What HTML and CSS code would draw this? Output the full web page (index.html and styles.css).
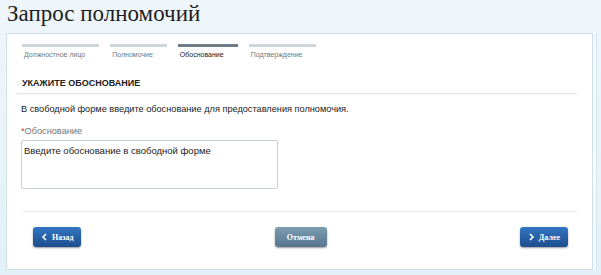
FILE: index.html
```html
<!DOCTYPE html>
<html lang="ru">
<head>
    <meta charset="UTF-8">
    <meta name="viewport" content="width=device-width, initial-scale=1.0">
    <title>Запрос полномочий</title>
    <link rel="stylesheet" href="styles.css">
</head>
<body>
    <h1 class="title">Запрос полномочий</h1>

    <div class="panel">
        <div class="steps">
            <div class="step">Должностное лицо</div>
            <div class="step">Полномочие</div>
            <div class="step active">Обоснование</div>
            <div class="step">Подтверждение</div>
        </div>

        <div class="section">
            <h2 class="section-title">УКАЖИТЕ ОБОСНОВАНИЕ</h2>
            <p class="hint">В свободной форме введите обоснование для предоставления полномочия.</p>
            <label class="label" for="reason"><span class="req">*</span>Обоснование</label>
            <textarea class="field" id="reason">Введите обоснование в свободной форме</textarea>
        </div>

        <div class="actions">
            <button class="button">
                <svg width="7" height="8" viewBox="0 0 7 8"><path d="M5 1 L2 4 L5 7" fill="none" stroke="#fff" stroke-width="1.6"/></svg>
                Назад
            </button>
            <button class="button cancel">Отмена</button>
            <button class="button">
                <svg width="7" height="8" viewBox="0 0 7 8"><path d="M2 1 L5 4 L2 7" fill="none" stroke="#fff" stroke-width="1.6"/></svg>
                Далее
            </button>
        </div>
    </div>
</body>
</html>
```
FILE: styles.css
```css
body {
    margin: 0;
    height: 275px;
    background: linear-gradient(to bottom, #eef6fb, #e4f0f8);
    font-family: 'Liberation Sans', Arial, sans-serif;
    color: #222;
    overflow: hidden;
}
.title {
    margin: 0;
    padding: 0 0 0 7px;
    height: 33px;
    font-family: 'Liberation Serif', 'Times New Roman', serif;
    font-weight: normal;
    font-size: 23px;
    line-height: 28px;
    color: #1e1e1e;
}
.panel {
    width: 585px;
    margin-left: 6px;
    background: #fff;
    border: 1px solid #cfe0ea;
    box-shadow: 3px 0 0 #f4f9fc, 4px 0 0 #d6e6ef;
    padding: 10px 0 22px;
}
.steps {
    display: flex;
    gap: 11px;
    padding-left: 15px;
}
.step {
    border-top: 3px solid #cdd6db;
    padding: 3px 14px 0 2px;
    font-size: 7px;
    line-height: 10px;
    color: #6f7a80;
}
.step.active {
    border-top-color: #6c7e87;
    color: #222;
}
.section {
    margin: 17px 15px 0 10px;
}
.section-title {
    margin: 0;
    padding: 0 0 4px 5px;
    font-size: 9px;
    line-height: 12px;
    font-weight: bold;
    border-bottom: 1px solid #e6e9eb;
    box-shadow: 0 1px 0 #f3f5f6;
}
.hint {
    margin: 9px 0 0 4px;
    font-size: 9.2px;
    line-height: 12px;
}
.label {
    display: block;
    margin: 10px 0 0 4px;
    font-size: 9.2px;
    line-height: 12px;
    color: #777;
}
.req {
    color: #c0392b;
}
.field {
    display: block;
    box-sizing: border-box;
    width: 257px;
    height: 49px;
    margin: 3px 0 0 4px;
    padding: 4px 2px;
    border: 1px solid #c7ced3;
    border-radius: 2px;
    font-family: 'Liberation Sans', Arial, sans-serif;
    font-size: 9.5px;
    line-height: 11px;
    color: #222;
    resize: none;
}
.actions {
    display: flex;
    justify-content: space-between;
    align-items: center;
    margin: 22px 15px 0 16px;
    padding: 15px 9px 0 10px;
    border-top: 1px solid #e8ebed;
}
.button {
    display: flex;
    align-items: center;
    gap: 4px;
    height: 20px;
    padding: 0 8px;
    border: none;
    border-radius: 3px;
    background: linear-gradient(to bottom, #3476c1, #1c4d8e);
    box-shadow: 0 1px 2px rgba(0, 0, 0, 0.4);
    color: #fff;
    font-family: 'Liberation Serif', 'Times New Roman', serif;
    font-weight: bold;
    font-size: 8px;
    cursor: pointer;
}
.button.cancel {
    background: linear-gradient(to bottom, #7e9db2, #56768d);
    padding: 0 12px;
}
```
